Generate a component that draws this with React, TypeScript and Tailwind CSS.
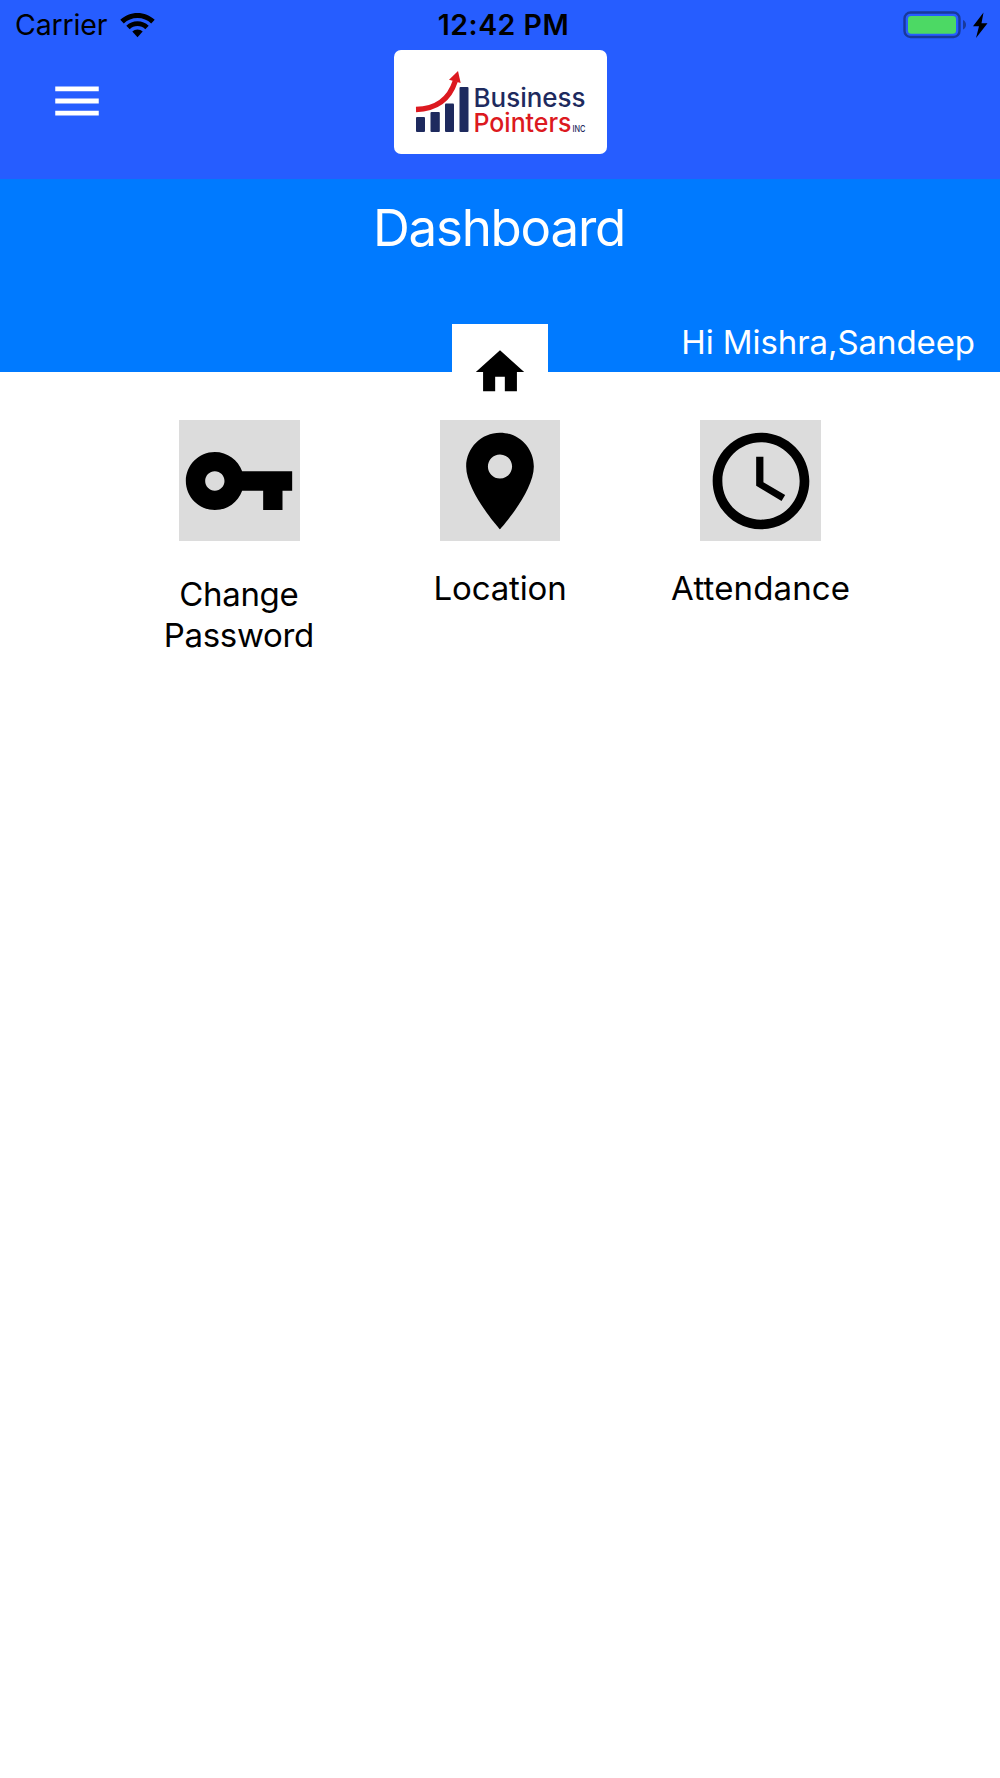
import { ReactNode } from "react";

interface TileProps {
	label: string;
	path: string;
	labelClass: string;
}

interface IconProps {
	path: string;
	className: string;
}

const paths = {
	menu: "M3 18h18v-2H3v2zm0-5h18v-2H3v2zm0-7v2h18V6H3z",
	home: "M10 20v-6h4v6h5v-8h3L12 3 2 12h3v8z",
	key: "M12.65 10C11.83 7.67 9.61 6 7 6c-3.31 0-6 2.69-6 6s2.69 6 6 6c2.61 0 4.83-1.67 5.65-4H17v4h4v-4h2v-4H12.65zM7 14c-1.1 0-2-.9-2-2s.9-2 2-2 2 .9 2 2-.9 2-2 2z",
	place: "M12 2C8.13 2 5 5.13 5 9c0 5.25 7 13 7 13s7-7.75 7-13c0-3.87-3.13-7-7-7zm0 9.5c-1.38 0-2.5-1.12-2.5-2.5s1.12-2.5 2.5-2.5 2.5 1.12 2.5 2.5-1.12 2.5-2.5 2.5z",
	clock: "M11.99 2C6.47 2 2 6.48 2 12s4.47 10 9.99 10C17.52 22 22 17.52 22 12S17.52 2 11.99 2zM12 20c-4.42 0-8-3.58-8-8s3.58-8 8-8 8 3.58 8 8-3.58 8-8 8zm.5-13H11v6l5.25 3.15.75-1.23-4.5-2.67z",
};

const Icon = ({ path, className }: IconProps) => (
	<svg className={className} viewBox="0 0 24 24" fill="currentColor">
		<path d={path} />
	</svg>
);

const StatusBar = () => (
	<div className="grid h-[50px] grid-cols-3 items-center pl-[15px] pr-[11px] text-black">
		<div className="flex items-center gap-[13px]">
			<span className="text-[28.5px] leading-[50px] tracking-[-0.15px]">Carrier</span>
			<svg className="h-[25px] w-[35px]" viewBox="0 0 35 25">
				<path d="M17.5 0C11 0 5 2.5 .3 6.8L3.8 10.5C7.5 7.1 12.2 5.1 17.5 5.1S27.5 7.1 31.2 10.5L34.7 6.8C30 2.5 24 0 17.5 0z" />
				<path d="M17.5 8.3C13.2 8.3 9.3 9.9 6.3 12.8L9.7 16.2C11.8 14.2 14.5 13.1 17.5 13.1S23.2 14.2 25.3 16.2L28.7 12.8C25.7 9.9 21.8 8.3 17.5 8.3z" />
				<path d="M17.5 16.5C15.5 16.5 13.7 17.2 12.3 18.5L17.5 24.2 22.7 18.5C21.3 17.2 19.5 16.5 17.5 16.5z" />
			</svg>
		</div>
		<span className="whitespace-nowrap pl-[3px] text-center text-[28.5px] font-semibold leading-[50px] tracking-[0.5px]">
			12:42 PM
		</span>
		<svg className="mb-px h-[28px] w-[86px] justify-self-end" viewBox="0 0 86 28">
			<rect x="1.5" y="1.5" width="55" height="24.5" rx="6" fill="none" stroke="#183a9b" strokeWidth="2.4" />
			<rect x="5" y="5" width="48" height="17.8" rx="3.2" fill="#4cd964" />
			<path d="M60 9C64 10.5 64 17 60 18.5z" fill="#183a9b" />
			<path d="M80.5 1.5L70 15.3H76L73 27 84.5 12.2H78.5z" />
		</svg>
	</div>
);

const Logo = () => (
	<div className="h-[104px] w-[213.5px] rounded-[7px] bg-white">
		<svg className="h-full w-full" viewBox="0 0 213.5 104">
			<g fill="#1e2a5e">
				<rect x="22" y="67" width="9" height="15" rx="1" />
				<rect x="36.5" y="62" width="9.3" height="20" rx="1" />
				<rect x="51" y="53.5" width="9" height="28.5" rx="1" />
				<rect x="65.5" y="37" width="9" height="45" rx="1" />
			</g>
			<path d="M22 59.5C42.5 59 55.500 49 61.3 31" fill="none" stroke="#dc1920" strokeWidth="5.3" />
			<path d="M64 21L55 29.8 66.700 33z" fill="#dc1920" />
			<g fontFamily="Inter, sans-serif" fontWeight="500">
				<text x="79.5" y="57" fontSize="26" fill="#1e2a5e" textLength="112" lengthAdjust="spacingAndGlyphs">
					Business
				</text>
				<text x="79.5" y="82" fontSize="26" fill="#dc1920" textLength="98" lengthAdjust="spacingAndGlyphs">
					Pointers
				</text>
				<text x="178.5" y="82" fontSize="9.5" fill="#1e2a5e" textLength="13" lengthAdjust="spacingAndGlyphs">
					INC
				</text>
			</g>
		</svg>
	</div>
);

const Header = ({ children }: { children: ReactNode }) => (
	<header className="h-[178.5px] bg-[#265dff]">
		<StatusBar />
		<div className="grid grid-cols-3">
			<button className="ml-12 mt-[21.5px] h-[58px] w-[58px] text-white" aria-label="Menu">
				<Icon path={paths.menu} className="h-[58px] w-[58px]" />
			</button>
			<div className="flex justify-center pl-px">{children}</div>
		</div>
	</header>
);

const Tile = ({ label, path, labelClass }: TileProps) => (
	<div className="flex w-[160px] flex-col items-center">
		<div className="flex h-[121px] w-[120.5px] items-center justify-center bg-[#dcdcdc]">
			<Icon path={path} className="h-[116px] w-[116px]" />
		</div>
		<span className={labelClass}>{label}</span>
	</div>
);

export default function App() {
	return (
		<div className="h-[1778px] w-[1000px] bg-white font-['Inter',sans-serif] text-black">
			<Header>
				<Logo />
			</Header>
			<section className="flex h-[193.5px] flex-col items-center bg-[#007aff] text-white">
				<h1 className="mt-[17px] h-[64px] pr-[2px] text-[51px] leading-[64px] tracking-[-1.2px]">Dashboard</h1>
				<div className="mt-[64px] grid w-full grid-cols-[1fr_96.5px_1fr]">
					<div className="col-start-2 flex h-[97px] items-center justify-center bg-white text-black">
						<Icon path={paths.home} className="h-[58px] w-[58px]" />
					</div>
					<span className="whitespace-nowrap pr-[25px] text-right text-[33px] leading-[36px] tracking-[-0.08px]">
						Hi Mishra,Sandeep
					</span>
				</div>
			</section>
			<main className="flex justify-center gap-[100.7px] pt-12">
				<Tile
					label="Change Password"
					path={paths.key}
					labelClass="mt-[33px] pr-px text-center text-[33px] leading-[40.5px] tracking-[-0.3px]"
				/>
				<Tile
					label="Location"
					path={paths.place}
					labelClass="mt-[27px] whitespace-nowrap text-center text-[33px] leading-[40.5px] tracking-[-0.15px]"
				/>
				<Tile
					label="Attendance"
					path={paths.clock}
					labelClass="mt-[27px] whitespace-nowrap text-center text-[33px] leading-[40.5px] tracking-[0.15px]"
				/>
			</main>
		</div>
	);
}
